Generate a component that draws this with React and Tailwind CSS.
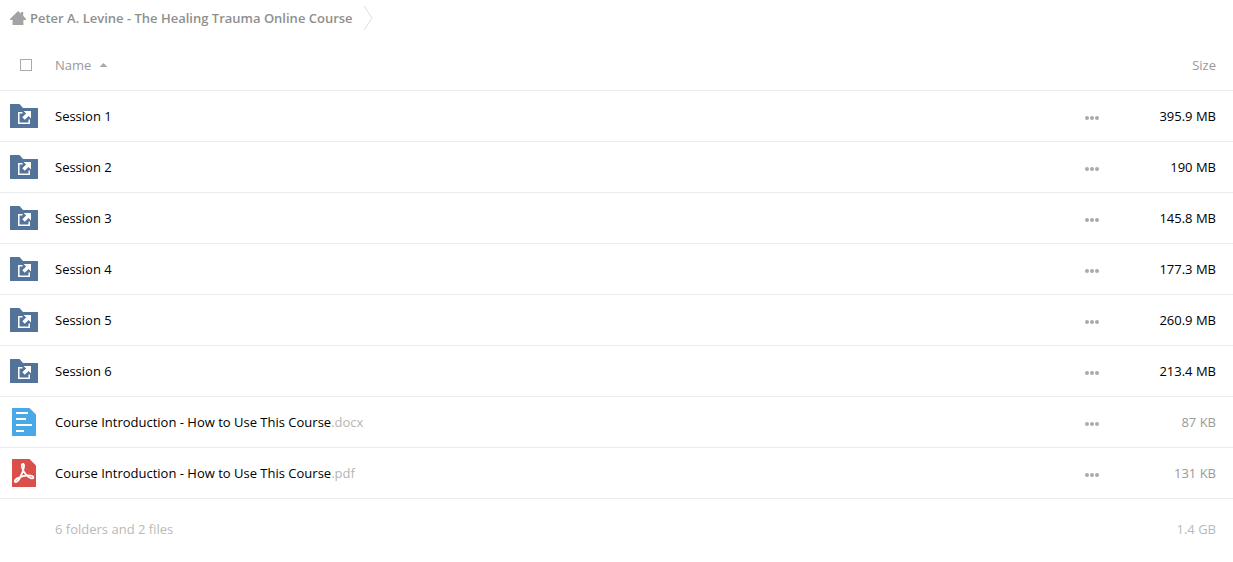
import React, { useState } from 'react';

const items = [
  { name: 'Session 1', type: 'folder', size: '395.9 MB' },
  { name: 'Session 2', type: 'folder', size: '190 MB' },
  { name: 'Session 3', type: 'folder', size: '145.8 MB' },
  { name: 'Session 4', type: 'folder', size: '177.3 MB' },
  { name: 'Session 5', type: 'folder', size: '260.9 MB' },
  { name: 'Session 6', type: 'folder', size: '213.4 MB' },
  { name: 'Course Introduction - How to Use This Course', ext: '.docx', type: 'docx', size: '87 KB' },
  { name: 'Course Introduction - How to Use This Course', ext: '.pdf', type: 'pdf', size: '131 KB' },
];

function HomeIcon() {
  return (
    <svg width="16" height="14" viewBox="0 0 16 14" fill="#a3a3a3" aria-hidden="true">
      <path d="M8 0L11 2.7V1H13.2V4.7L16 8V9H13.4V14H2.6V9H0V8Z" />
    </svg>
  );
}

function FolderIcon() {
  return (
    <svg width="28" height="24" viewBox="0 0 28 24" aria-hidden="true">
      <path d="M0.5 0H9.5L13 4H27.5A0.5 0.5 0 0 1 28 4.5V23.5A0.5 0.5 0 0 1 27.5 24H0.5A0.5 0.5 0 0 1 0 23.5V0.5A0.5 0.5 0 0 1 0.5 0Z" fill="#54739b" />
      <path d="M12.5 8.8H8.8V19.2H19.2V15.5" fill="none" stroke="#fff" strokeWidth="1.5" />
      <path d="M13.6 7H21V14.4L18.6 12L14.8 15.8L12.3 13.3L16.1 9.5Z" fill="#fff" />
    </svg>
  );
}

function DocIcon() {
  return (
    <svg width="24" height="28" viewBox="0 0 24 28" aria-hidden="true">
      <path d="M0.5 0H17.5L24 6.5V27.5A0.5 0.5 0 0 1 23.5 28H0.5A0.5 0.5 0 0 1 0 27.5V0.5A0.5 0.5 0 0 1 0.5 0Z" fill="#49a8e8" />
      <path d="M4 5H16M4 11H14M4 17H20M4 23H12" stroke="#fff" strokeWidth="2" />
    </svg>
  );
}

function PdfIcon() {
  return (
    <svg width="24" height="28" viewBox="0 0 24 28" aria-hidden="true">
      <path d="M0.5 0H17.5L24 6.5V27.5A0.5 0.5 0 0 1 23.5 28H0.5A0.5 0.5 0 0 1 0 27.5V0.5A0.5 0.5 0 0 1 0.5 0Z" fill="#db4f4a" />
      <path
        d="M11 5C9.2 5 9.6 7.6 11 11C12.6 14.6 16.4 18.9 19.6 19.4C21.8 19.7 22.1 17.3 19.8 16.8C15.8 16 9.6 17.2 5.2 19.4C2.2 21 2.2 23.2 3.9 23C6.2 22.7 9.4 16.6 11 11.8C12.1 8.4 12.6 5 11 5Z"
        fill="none"
        stroke="#fff"
        strokeWidth="1.8"
        strokeLinejoin="round"
      />
    </svg>
  );
}

const icons = { folder: FolderIcon, docx: DocIcon, pdf: PdfIcon };

export default function App() {
  const [selectAll, setSelectAll] = useState(false);
  const [desc, setDesc] = useState(false);

  const folders = items.filter((i) => i.type === 'folder');
  const files = items.filter((i) => i.type !== 'folder');
  const rows = desc ? [...folders].reverse().concat([...files].reverse()) : items;

  return (
    <div className="min-h-screen bg-white font-['Open_Sans',sans-serif] text-[13px] leading-5 text-black">
      <nav aria-label="Breadcrumb" className="flex h-9 items-center pl-[10px]">
        <a href="#" className="flex items-center gap-1 font-semibold text-[#8f8f8f]">
          <HomeIcon />
          Peter A. Levine - The Healing Trauma Online Course
        </a>
        <svg className="ml-[10px]" width="10" height="24" viewBox="0 0 10 24" fill="none" stroke="#dedede" aria-hidden="true">
          <path d="M1 0L9 12L1 24" />
        </svg>
      </nav>

      <table className="mt-1 w-full table-fixed border-separate border-spacing-0">
        <colgroup>
          <col className="w-[55px]" />
          <col />
          <col className="w-12" />
          <col className="w-[117px]" />
        </colgroup>
        <thead>
          <tr className="h-[51px] text-[#999]">
            <th className="border-b border-[#ebebeb] p-0 pl-5 text-left">
              <input
                type="checkbox"
                aria-label="Select all"
                checked={selectAll}
                onChange={(e) => setSelectAll(e.target.checked)}
                className="block size-3 appearance-none border border-[#aaa] bg-white checked:bg-[#aaa]"
              />
            </th>
            <th className="border-b border-[#ebebeb] p-0 text-left font-normal">
              <button type="button" onClick={() => setDesc(!desc)} className="flex items-center gap-2">
                Name
                <svg className={desc ? 'rotate-180' : ''} width="9" height="4" viewBox="0 0 9 4" fill="#aaa" aria-hidden="true">
                  <path d="M0.5 4L4.5 0L8.5 4Z" />
                </svg>
              </button>
            </th>
            <th className="border-b border-[#ebebeb] p-0" />
            <th className="border-b border-[#ebebeb] p-0 pr-[17px] text-right font-normal">Size</th>
          </tr>
        </thead>
        <tbody>
          {rows.map((item) => {
            const Icon = icons[item.type];
            const isFolder = item.type === 'folder';
            return (
              <tr key={item.name + item.type} className="h-[51px]">
                <td className="border-b border-[#ebebeb] p-0 pl-[10px]">
                  <div className="flex w-7 justify-center">
                    <Icon />
                  </div>
                </td>
                <td className="truncate border-b border-[#ebebeb] p-0">
                  <a href="#">
                    {item.name}
                    {item.ext && <span className="text-[#b5b5b5]">{item.ext}</span>}
                  </a>
                </td>
                <td className="border-b border-[#ebebeb] p-0">
                  <button type="button" aria-label="More actions" className="mx-auto block px-1 pt-1">
                    <svg width="14" height="4" viewBox="0 0 14 4" fill="#aaa" aria-hidden="true">
                      <circle cx="2" cy="2" r="2" />
                      <circle cx="7" cy="2" r="2" />
                      <circle cx="12" cy="2" r="2" />
                    </svg>
                  </button>
                </td>
                <td className={`border-b border-[#ebebeb] p-0 pr-[17px] text-right ${isFolder ? '' : 'text-[#999]'}`}>
                  {item.size}
                </td>
              </tr>
            );
          })}
        </tbody>
        <tfoot>
          <tr className="h-[60px] text-[#b9b9b9]">
            <td className="p-0" />
            <td className="p-0">
              {folders.length} folders and {files.length} files
            </td>
            <td className="p-0" />
            <td className="p-0 pr-[17px] text-right">1.4 GB</td>
          </tr>
        </tfoot>
      </table>
    </div>
  );
}
